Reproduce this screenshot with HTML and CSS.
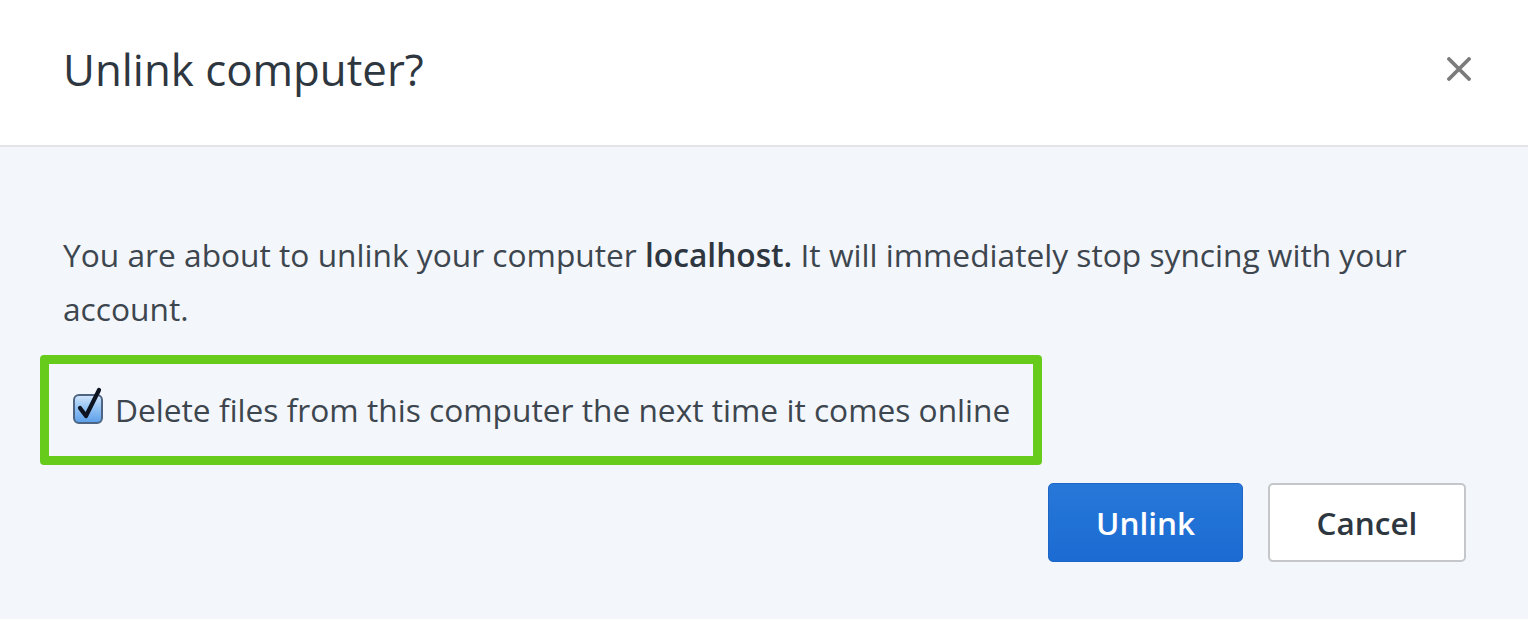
FILE: index.html
```html
<!DOCTYPE html>
<html lang="en">
<head>
<meta charset="utf-8">
<title>Unlink computer?</title>
<link rel="stylesheet" href="styles.css">
</head>
<body>
<div class="modal">
  <header class="modal-header">
    <h1 class="modal-title">Unlink computer?</h1>
    <button class="close-btn" aria-label="Close">
      <svg width="24" height="24" viewBox="0 0 24 24"><path d="M2 2 L22 22 M22 2 L2 22" stroke="#7b7b7b" stroke-width="3.8" stroke-linecap="round"/></svg>
    </button>
  </header>
  <section class="modal-body">
    <p class="message">You are about to unlink your computer <b>localhost.</b> It will immediately stop syncing with your account.</p>
    <div class="highlight">
      <label class="check-row">
        <span class="checkbox">
          <svg width="32" height="38" viewBox="0 0 32 38">
            <defs>
              <linearGradient id="cb" x1="0" y1="0" x2="0" y2="1">
                <stop offset="0" stop-color="#d3e6fb"/>
                <stop offset="0.5" stop-color="#8fc0f3"/>
                <stop offset="1" stop-color="#5b9fe9"/>
              </linearGradient>
            </defs>
            <rect x="2" y="8" width="28" height="28" rx="5" fill="url(#cb)" stroke="#4d6483" stroke-width="2"/>
            <path d="M8 21 L14 29 L27 3" fill="none" stroke="#0d1420" stroke-width="4.2" stroke-linecap="round" stroke-linejoin="round"/>
          </svg>
        </span>
        <span class="check-label">Delete files from this computer the next time it comes online</span>
      </label>
    </div>
    <div class="actions">
      <button class="btn btn-primary">Unlink</button>
      <button class="btn btn-secondary">Cancel</button>
    </div>
  </section>
</div>
</body>
</html>
```
FILE: styles.css
```css
html, body {
  margin: 0;
  padding: 0;
  height: 100%;
}
body {
  font-family: "Open Sans", "Liberation Sans", sans-serif;
  background: #f3f6fb;
  color: #3d464e;
}
.modal {
  display: flex;
  flex-direction: column;
  min-height: 100%;
}
.modal-header {
  height: 145px;
  background: #ffffff;
  border-bottom: 2px solid #e2e4e7;
  display: flex;
  align-items: center;
  justify-content: space-between;
  padding: 0 57px 0 63px;
  box-sizing: content-box;
}
.modal-title {
  margin: 0 0 8px 0;
  font-size: 43.8px;
  font-weight: 400;
  color: #2e3740;
  letter-spacing: 0;
}
.close-btn {
  border: 0;
  background: none;
  padding: 0;
  width: 24px;
  height: 24px;
  margin-bottom: 8px;
  display: flex;
}
.modal-body {
  flex: 1;
  padding: 81px 62px 0 40px;
}
.message {
  margin: 0 0 19px 23px;
  font-size: 31.7px;
  line-height: 54px;
}
.message b {
  font-weight: 600;
  color: #2e3740;
}
.highlight {
  box-sizing: border-box;
  width: 1002px;
  height: 110px;
  border: 9px solid #66cb1b;
  border-radius: 4px;
  display: flex;
  align-items: center;
  padding-left: 23px;
}
.check-row {
  display: flex;
  align-items: center;
  gap: 11px;
}
.checkbox {
  display: flex;
  margin-top: -8px;
}
.check-label {
  font-size: 31.7px;
  line-height: 40px;
}
.actions {
  display: flex;
  justify-content: flex-end;
  gap: 25px;
  margin-top: 18px;
}
.btn {
  height: 79px;
  font-family: "Open Sans", "Liberation Sans", sans-serif;
  font-size: 31.5px;
  font-weight: 600;
  border-radius: 5px;
  cursor: pointer;
}
.btn-primary {
  width: 195px;
  color: #ffffff;
  background: linear-gradient(#2778d8, #1b6bd3);
  border: 1px solid #1c66c5;
}
.btn-secondary {
  width: 198px;
  color: #2e3740;
  background: #ffffff;
  border: 2px solid #c4c6c9;
}
```
